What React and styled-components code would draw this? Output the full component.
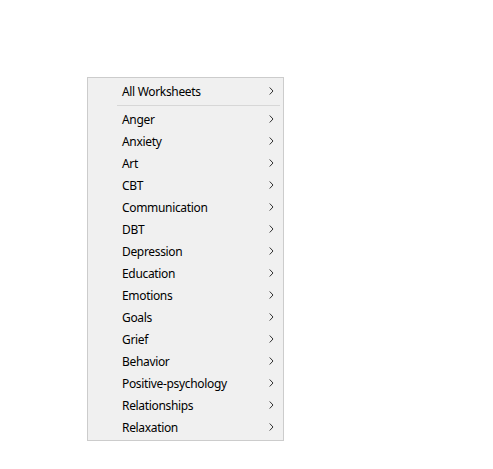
import React from 'react';
import styled, { createGlobalStyle } from 'styled-components';

const GlobalStyle = createGlobalStyle`
  body {
    margin: 0;
    background: #ffffff;
    font-family: "Noto Sans", "Open Sans", sans-serif;
  }
`;

const Page = styled.div`
  padding: 77px 0 0 87px;
`;

const Menu = styled.div`
  width: 195px;
  background: #f0f0f0;
  border: 1px solid #cccccc;
  padding: 2px 0;
`;

const Item = styled.div`
  display: flex;
  align-items: center;
  justify-content: space-between;
  height: 22px;
  padding: 0 9px 0 34px;
  font-size: 12px;
  letter-spacing: -0.33px;
  color: #000000;
  cursor: default;
`;

const Separator = styled.div`
  height: 1px;
  margin: 3px 3px 2px 29px;
  background: #d7d7d7;
`;

const Chevron = () => (
  <svg width="5" height="8" viewBox="0 0 5 8">
    <polyline points="0.7,0.5 4,4 0.7,7.5" fill="none" stroke="#333" strokeWidth="1" />
  </svg>
);

const categories = [
  'Anger',
  'Anxiety',
  'Art',
  'CBT',
  'Communication',
  'DBT',
  'Depression',
  'Education',
  'Emotions',
  'Goals',
  'Grief',
  'Behavior',
  'Positive-psychology',
  'Relationships',
  'Relaxation',
];

const App = () => {
  return (
    <>
      <GlobalStyle />
      <Page>
        <Menu>
          <Item>
            <span>All Worksheets</span>
            <Chevron />
          </Item>
          <Separator />
          {categories.map((c) => (
            <Item key={c}>
              <span>{c}</span>
              <Chevron />
            </Item>
          ))}
        </Menu>
      </Page>
    </>
  );
};

export default App;
